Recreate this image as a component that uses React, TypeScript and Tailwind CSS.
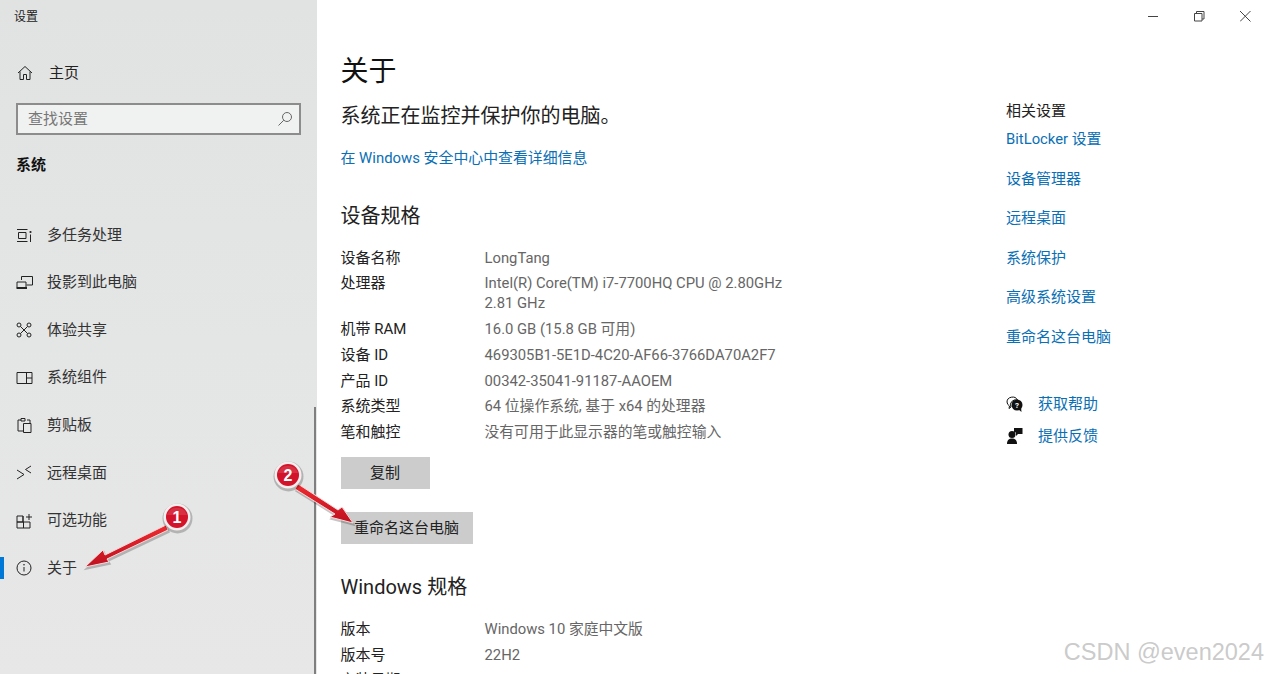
import type { ReactNode } from 'react';

const FONT = "font-['Roboto','Noto_Sans_CJK_SC',sans-serif]";

const icons: Record<string, ReactNode> = {
  multitask: (
    <>
      <path d="M1 2.500h10.500M1 14.500h10.500M2.500 5.500h7.500v6h-7.500z" />
      <circle cx="14.500" cy="5" r="1.100" fill="currentColor" stroke="none" />
      <path d="M14.500 7.500v7.500" />
    </>
  ),
  project: (
    <>
      <path d="M5.500 6V2.500h11v8.500h-6" />
      <path d="M1 8h9v5.500h-9z" />
      <path d="M.5 14h10.500" strokeWidth="2" />
    </>
  ),
  share: (
    <>
      <circle cx="3" cy="3" r="2" />
      <circle cx="13" cy="3" r="2" />
      <circle cx="3" cy="13" r="2" />
      <circle cx="13" cy="13" r="2" />
      <path d="M4.500 4.500l7 7M11.500 4.500l-7 7" />
    </>
  ),
  components: <path d="M1 2.500h15v11h-15zM10.500 2.500v11M10.500 8h5.500" />,
  clipboard: (
    <>
      <path d="M5 3H2v11h5M11 3h3v3" />
      <path d="M5 4V1.500h4V4z" />
      <path d="M7.500 6.500h7.500v9h-7.500z" />
    </>
  ),
  remote: <path d="M1 5l7 4.500-7 4.500M15 1L9.500 4.500 15 8" />,
  optional: <path d="M1 3h6v6h-6zM7 3v6M1 9v6h13V9H1M7.500 9v6M10 4h6M13 1v6" />,
  about: (
    <>
      <circle cx="8" cy="8" r="7" />
      <path d="M8 7v4.500" />
      <circle cx="8" cy="4.800" r=".8" fill="currentColor" stroke="none" />
    </>
  ),
};

function NavIcon({ name }: { name: string }) {
  return (
    <svg width="17" height="16" viewBox="0 0 17 16" fill="none" stroke="currentColor" strokeWidth="1" className="text-[#222]">
      {icons[name]}
    </svg>
  );
}

const navItems = [
  { icon: 'multitask', label: '多任务处理' },
  { icon: 'project', label: '投影到此电脑' },
  { icon: 'share', label: '体验共享' },
  { icon: 'components', label: '系统组件' },
  { icon: 'clipboard', label: '剪贴板' },
  { icon: 'remote', label: '远程桌面' },
  { icon: 'optional', label: '可选功能' },
  { icon: 'about', label: '关于', active: true },
];

const specs: [string, ReactNode][] = [
  ['设备名称', 'LongTang'],
  ['处理器', <>Intel(R) Core(TM) i7-7700HQ CPU @ 2.80GHz<br />2.81 GHz</>],
  ['机带 RAM', '16.0 GB (15.8 GB 可用)'],
  ['设备 ID', '469305B1-5E1D-4C20-AF66-3766DA70A2F7'],
  ['产品 ID', '00342-35041-91187-AAOEM'],
  ['系统类型', '64 位操作系统, 基于 x64 的处理器'],
  ['笔和触控', '没有可用于此显示器的笔或触控输入'],
];

const winSpecs: [string, string][] = [
  ['版本', 'Windows 10 家庭中文版'],
  ['版本号', '22H2'],
  ['安装日期', ''],
];

const related = ['设备管理器', '远程桌面', '系统保护', '高级系统设置', '重命名这台电脑'];

function SpecRows({ rows }: { rows: [string, ReactNode][] }) {
  return (
    <div className="grid grid-cols-[144px_1fr] gap-y-[5.8px] text-[15px] leading-[20px]">
      {rows.map(([label, value]) => (
        <div key={label} className="contents">
          <span className="text-[#222]">{label}</span>
          <span className="text-[14.8px] text-[#666]">{value}</span>
        </div>
      ))}
    </div>
  );
}

function Badge({ n, x, y }: { n: number; x: number; y: number }) {
  return (
    <g>
      <circle cx={x + 0.5} cy={y + 1.5} r="15" fill="#000" opacity=".22" />
      <circle cx={x} cy={y} r="13.500" fill="#f6eeee" />
      <circle cx={x} cy={y} r="11" fill="#d3132a" />
      <path d={`M${x - 10} ${y - 2}a10.500 10.500 0 0 1 20 0z`} fill="#fff" opacity=".12" />
      <text x={x} y={y + 5.500} textAnchor="middle" fontSize="16" fontWeight="700" fill="#fff" fontFamily="Liberation Sans, sans-serif">
        {n}
      </text>
    </g>
  );
}

const ARROW_ONE = 'M166 525L105 555 103 550 85 567 109 562 107 559 168 530z';
const ARROW_TWO = 'M298 484L338 510 342 507 353 523 330 517 335 514 295 489z';

export default function App() {
  return (
    <div className={`relative flex h-[674px] w-[1268px] overflow-hidden bg-white ${FONT}`}>
      {/* Sidebar */}
      <aside className="relative flex w-[317px] shrink-0 flex-col bg-gradient-to-b from-[#e1e3e3] to-[#e7e7e7]">
        <div className="pl-[14px] pt-[8px] text-[12px] leading-[18px] text-[#222]">设置</div>
        <div className="mt-[37px] flex items-center pl-[17px] text-[15px] leading-[20px] text-[#222]">
          <svg width="16" height="16" viewBox="0 0 16 16" fill="none" stroke="currentColor" className="mr-[16px]">
            <path d="M1 8l7-6.500L15 8M3 6.500V14.500h3.500v-5h3v5H13V6.500" />
          </svg>
          主页
        </div>
        <div className="mx-[16px] mt-[20px] flex h-[32px] items-center justify-between border-2 border-[#8c8c8c] bg-[#f0f1f1] pl-[10px] pr-[6px] text-[15px] text-[#777]">
          查找设置
          <svg width="16" height="16" viewBox="0 0 16 16" fill="none" stroke="#666">
            <circle cx="10" cy="6" r="4.500" />
            <path d="M6.800 9.200L1.500 14.500" />
          </svg>
        </div>
        <div className="mt-[20px] pl-[16px] text-[15px] font-bold leading-[20px] text-[#111]">系统</div>
        <nav className="mt-[36px] flex flex-col">
          {navItems.map((item) => (
            <div key={item.label} className="relative flex h-[47.65px] items-center pl-[16px] text-[15px] text-[#333]">
              {item.active && <span className="absolute left-0 top-[13px] h-[22px] w-[4px] bg-[#0078d7]" />}
              <NavIcon name={item.icon} />
              <span className="ml-[14px]">{item.label}</span>
            </div>
          ))}
        </nav>
        <div className="absolute bottom-0 right-[1.5px] h-[267px] w-[2px] bg-[#7f7f7f]" />
      </aside>

      {/* Main column */}
      <main className="flex min-w-0 flex-1 flex-col">
        <div className="flex h-[32px] shrink-0 justify-end text-[#444]">
          {[
            <path key="min" d="M0 5.500h10" />,
            <path key="max" d="M.5 2.500h7.500v7.500H.5zM2.500 2.500V.5H10v7.500H8" />,
            <path key="close" d="M0 0l10.500 10.500M10.500 0L0 10.500" />,
          ].map((shape) => (
            <div key={shape.key} className="flex h-[32px] w-[46px] items-center justify-center">
              <svg width="11" height="11" viewBox="0 0 11 11" fill="none" stroke="currentColor">{shape}</svg>
            </div>
          ))}
        </div>
        <div className="flex flex-1 pl-[23.5px]">
          <section className="w-[665.5px] shrink-0">
            <h1 className="mt-[19px] text-[28px] leading-[42px] text-[#111]">关于</h1>
            <p className="mt-[9px] text-[20px] leading-[28px] text-[#222]">系统正在监控并保护你的电脑。</p>
            <a className="mt-[17px] block text-[14.9px] leading-[22px] text-[#0a6fb5]">在 Windows 安全中心中查看详细信息</a>
            <h2 className="mt-[32px] text-[20px] leading-[30px] text-[#222]">设备规格</h2>
            <div className="mt-[16.5px]">
              <SpecRows rows={specs} />
            </div>
            <button className="mt-[14.5px] block h-[32px] w-[89px] bg-[#cccccc] text-[15px] text-[#222]">复制</button>
            <button className="mt-[23px] block h-[32px] w-[132px] bg-[#cccccc] text-[15px] text-[#222]">重命名这台电脑</button>
            <h2 className="mt-[28px] text-[20px] leading-[30px] text-[#222]">Windows 规格</h2>
            <div className="mt-[17px]">
              <SpecRows rows={winSpecs} />
            </div>
          </section>
          <section className="flex-1 pt-[69px] text-[15px] leading-[20px]">
            <div className="text-[#222]">相关设置</div>
            <div className="mt-[8px] flex flex-col gap-[19.6px] text-[#0a6fb5]">
              <a className="text-[14.8px]">BitLocker 设置</a>
              {related.map((t) => (
                <a key={t}>{t}</a>
              ))}
            </div>
            <div className="mt-[47px] flex items-center text-[#0a6fb5]">
              <svg width="18" height="18" viewBox="0 0 18 18" className="mr-[14px]">
                <path d="M1 7a5.500 5 0 0 1 10.500-2A5.500 5 0 0 0 5 12L3 13.500 3.500 11A5 5 0 0 1 1 7z" fill="none" stroke="#111" />
                <circle cx="11" cy="10" r="5.500" fill="#111" />
                <path d="M12 14l3.500 3-.5-5z" fill="#111" />
                <text x="11" y="13" textAnchor="middle" fontSize="8" fontWeight="700" fill="#fff">?</text>
              </svg>
              获取帮助
            </div>
            <div className="mt-[12px] flex items-center text-[#0a6fb5]">
              <svg width="18" height="18" viewBox="0 0 18 18" className="mr-[14px]">
                <circle cx="6" cy="7.500" r="3.500" fill="#111" />
                <path d="M1 17c0-4 2-5.500 5-5.500s5 1.500 5 5.500z" fill="#111" />
                <path d="M8 1h8.500v6H12l-2 2V5.500H8z" fill="#111" />
              </svg>
              提供反馈
            </div>
          </section>
        </div>
      </main>

      {/* Annotations */}
      <svg className="pointer-events-none absolute inset-0" width="1268" height="674">
        <defs>
          <linearGradient id="arrowRed" x1="0" y1="0" x2="0" y2="1">
            <stop offset="0" stopColor="#ee2a30" />
            <stop offset="1" stopColor="#c01120" />
          </linearGradient>
        </defs>
        <path d={ARROW_ONE} fill="#000" opacity=".22" transform="translate(1 2)" stroke="#000" strokeWidth="1.500" />
        <path d={ARROW_TWO} fill="#000" opacity=".22" transform="translate(1 2)" stroke="#000" strokeWidth="1.500" />
        <path d={ARROW_ONE} fill="url(#arrowRed)" stroke="#f6dcdc" strokeWidth="1" />
        <path d={ARROW_TWO} fill="url(#arrowRed)" stroke="#f6dcdc" strokeWidth="1" />
        <Badge n={1} x={177} y={517} />
        <Badge n={2} x={288} y={475} />
      </svg>
      <div className="absolute bottom-[8px] right-[4px] font-['Liberation_Sans',sans-serif] text-[23.5px] leading-[28px] text-[#c4c4c4]/90">
        CSDN @even2024
      </div>
    </div>
  );
}
